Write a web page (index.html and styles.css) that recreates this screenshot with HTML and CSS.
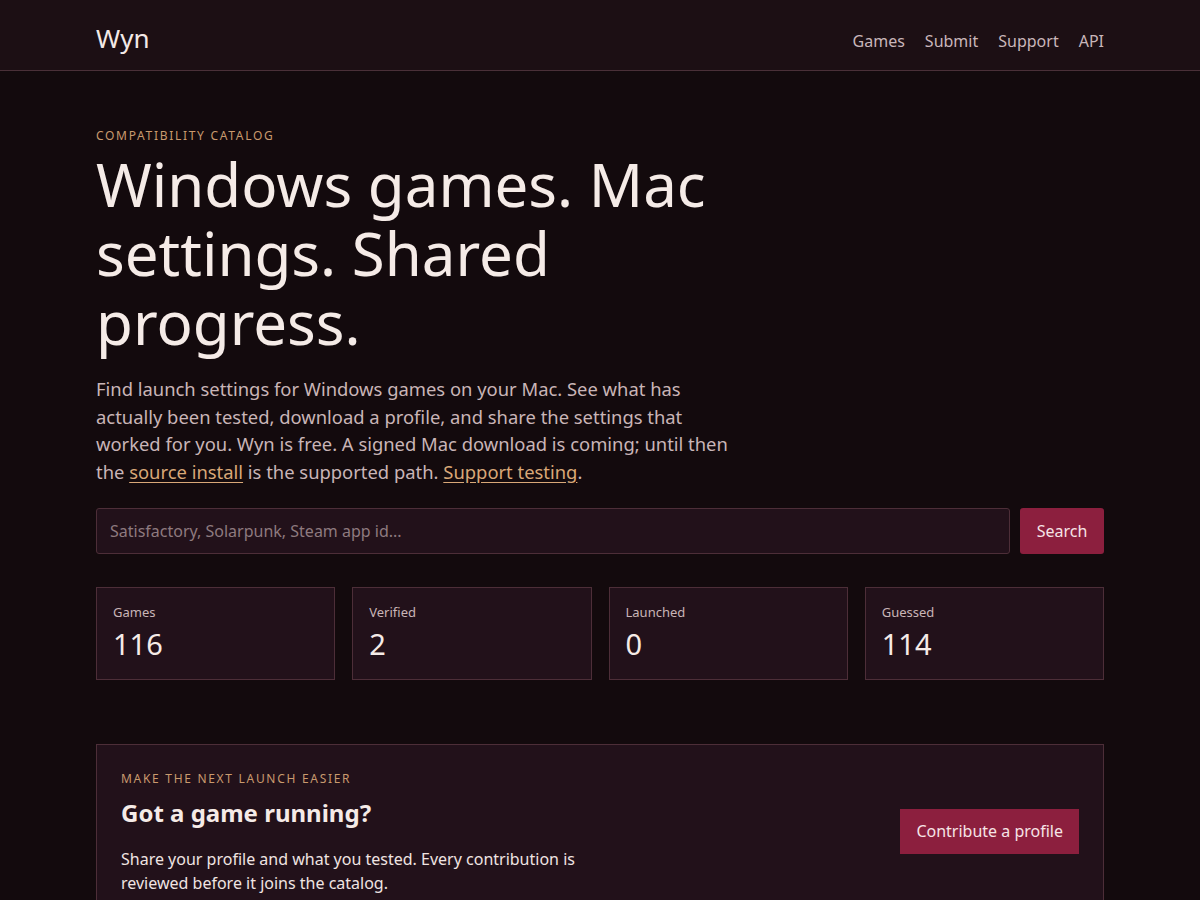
FILE: index.html
```html
<!DOCTYPE html>
<html lang="en">
<head>
    <meta charset="UTF-8">
    <meta name="viewport" content="width=device-width, initial-scale=1.0">
    <title>Wyn</title>
    <link rel="stylesheet" href="styles.css">
</head>
<body>
    <header class="site-header">
        <div class="wrap header-inner">
            <a class="brand" href="#">Wyn</a>
            <nav class="nav">
                <a href="#">Games</a>
                <a href="#">Submit</a>
                <a href="#">Support</a>
                <a href="#">API</a>
            </nav>
        </div>
    </header>

    <main class="wrap">
        <section class="hero">
            <p class="eyebrow">Compatibility catalog</p>
            <h1>Windows games. Mac settings. Shared progress.</h1>
            <p class="lead">
                Find launch settings for Windows games on your Mac. See what has actually been tested,
                download a profile, and share the settings that worked for you. Wyn is free. A signed
                Mac download is coming; until then the <a href="#">source install</a> is the supported
                path. <a href="#">Support testing</a>.
            </p>
        </section>

        <form class="search" onsubmit="return false">
            <input type="search" placeholder="Satisfactory, Solarpunk, Steam app id...">
            <button type="submit">Search</button>
        </form>

        <section class="stats">
            <div class="stat">
                <span class="stat-label">Games</span>
                <span class="stat-value">116</span>
            </div>
            <div class="stat">
                <span class="stat-label">Verified</span>
                <span class="stat-value">2</span>
            </div>
            <div class="stat">
                <span class="stat-label">Launched</span>
                <span class="stat-value">0</span>
            </div>
            <div class="stat">
                <span class="stat-label">Guessed</span>
                <span class="stat-value">114</span>
            </div>
        </section>

        <section class="cta">
            <div class="cta-text">
                <p class="eyebrow">Make the next launch easier</p>
                <h2>Got a game running?</h2>
                <p>Share your profile and what you tested. Every contribution is reviewed before it joins the catalog.</p>
            </div>
            <a class="cta-button" href="#">Contribute a profile</a>
        </section>
    </main>
</body>
</html>
```

FILE: styles.css
```css
body {
    margin: 0;
    font-family: 'Noto Sans', 'Open Sans', sans-serif;
    background-color: #130a0d;
    color: #f3e9e6;
}

a {
    color: inherit;
    text-decoration: none;
}

.wrap {
    max-width: 1008px;
    margin: 0 auto;
}

/* top bar */
.site-header {
    background-color: #1c0f14;
    border-bottom: 1px solid #4a3038;
}

.header-inner {
    display: flex;
    justify-content: space-between;
    align-items: center;
    height: 70px;
    box-sizing: border-box;
    padding-top: 8px;
}

.brand {
    font-size: 26px;
    color: #f3e9e6;
    margin-top: -3px;
}

.nav {
    display: flex;
    gap: 20px;
    margin-top: 4px;
}

.nav a {
    font-size: 16px;
    color: #c9b6ba;
}

/* hero */
.hero {
    padding-top: 56px;
}

.eyebrow {
    margin: 0;
    font-size: 12px;
    letter-spacing: 1.7px;
    text-transform: uppercase;
    color: #c99a6e;
}

h1 {
    margin: 6px 0 0;
    max-width: 660px;
    font-size: 60px;
    font-weight: 400;
    line-height: 69px;
    color: #f5ebe7;
}

.lead {
    margin: 18px 0 0;
    max-width: 640px;
    font-size: 18.4px;
    line-height: 27.7px;
    color: #c9b5b7;
}

.lead a {
    color: #d9a878;
    text-decoration: underline;
    text-underline-offset: 3px;
}

/* search */
.search {
    display: flex;
    gap: 10px;
    margin-top: 22px;
}

.search input {
    flex: 1;
    height: 46px;
    padding: 0 13px;
    box-sizing: border-box;
    background-color: #22111a;
    border: 1px solid #4d2e38;
    border-radius: 3px;
    font-family: inherit;
    font-size: 16px;
    color: #f3e9e6;
}

.search input::placeholder {
    color: #8e7a7f;
}

.search button {
    width: 84px;
    height: 46px;
    background-color: #8c1f3e;
    border: none;
    border-radius: 3px;
    font-family: inherit;
    font-size: 16px;
    color: #f6e4e6;
}

/* numbers */
.stats {
    display: grid;
    grid-template-columns: repeat(4, 1fr);
    gap: 17px;
    margin-top: 33px;
}

.stat {
    display: flex;
    flex-direction: column;
    height: 93px;
    box-sizing: border-box;
    padding: 15px 16px;
    background-color: #22111a;
    border: 1px solid #4d2e38;
}

.stat-label {
    font-size: 13px;
    color: #c9b5b7;
}

.stat-value {
    margin-top: 3px;
    font-size: 29px;
    line-height: 40px;
    color: #f5ebe7;
}

/* contribute block */
.cta {
    display: flex;
    justify-content: space-between;
    align-items: flex-start;
    margin-top: 64px;
    padding: 25px 24px 30px;
    background-color: #22111a;
    border: 1px solid #4d2e38;
}

.cta h2 {
    margin: 9px 0 0;
    font-size: 24px;
    font-weight: 700;
    color: #f5ebe7;
}

.cta-text p:last-child {
    margin: 18px 0 0;
    max-width: 470px;
    font-size: 16px;
    line-height: 24px;
    color: #f0e4e2;
}

.cta-button {
    margin-top: 39px;
    padding: 11px 16px 12px;
    background-color: #8c1f3e;
    font-size: 16px;
    color: #f6e4e6;
}
```
